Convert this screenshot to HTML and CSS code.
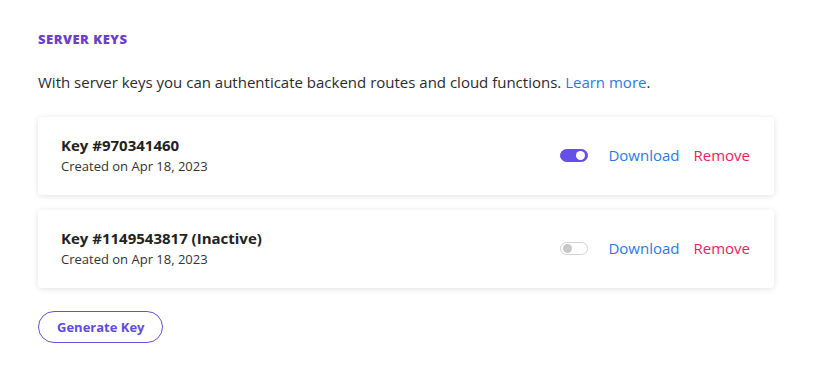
FILE: index.html
```html
<!DOCTYPE html>
<html lang="en">
<head>
    <meta charset="UTF-8">
    <meta name="viewport" content="width=device-width, initial-scale=1.0">
    <title>Server Keys</title>
    <link rel="stylesheet" href="styles.css">
</head>
<body>
    <div class="section">
        <h2 class="section-title">SERVER KEYS</h2>
        <p class="section-desc">With server keys you can authenticate backend routes and cloud functions. <a href="#" class="link">Learn more</a>.</p>

        <div class="key-card">
            <div class="key-info">
                <h3>Key #970341460</h3>
                <p>Created on Apr 18, 2023</p>
            </div>
            <div class="key-actions">
                <span class="toggle on"><span class="knob"></span></span>
                <a href="#" class="link">Download</a>
                <a href="#" class="remove">Remove</a>
            </div>
        </div>

        <div class="key-card">
            <div class="key-info">
                <h3>Key #1149543817 (Inactive)</h3>
                <p>Created on Apr 18, 2023</p>
            </div>
            <div class="key-actions">
                <span class="toggle"><span class="knob"></span></span>
                <a href="#" class="link">Download</a>
                <a href="#" class="remove">Remove</a>
            </div>
        </div>

        <button class="generate-btn">Generate Key</button>
    </div>
</body>
</html>
```

FILE: styles.css
```css
body {
    font-family: "Open Sans", sans-serif;
    margin: 0;
    padding: 0;
    background-color: #fff;
    color: #222;
}
.section {
    width: 736px;
    padding: 30px 38px;
}
.section-title {
    margin: 0;
    font-size: 13px;
    font-weight: 800;
    letter-spacing: 0.5px;
    color: #6c3fc9;
    line-height: 18px;
}
.section-desc {
    margin: 23px 0 24px;
    font-size: 15px;
    line-height: 22px;
    color: #2b2b2b;
}
.link {
    color: #2a7ae2;
    text-decoration: none;
}
.key-card {
    display: flex;
    justify-content: space-between;
    align-items: center;
    height: 78px;
    padding: 0 24px 2px 23px;
    box-sizing: border-box;
    margin-bottom: 15px;
    border-radius: 4px;
    box-shadow: 0 1px 6px rgba(0, 0, 0, 0.12);
}
.key-info h3 {
    margin: 0 0 2px;
    font-size: 15px;
    font-weight: 700;
    color: #222;
}
.key-info p {
    margin: 0;
    font-size: 13px;
    color: #333;
}
.key-actions {
    display: flex;
    align-items: center;
    font-size: 15px;
}
.toggle {
    display: flex;
    align-items: center;
    width: 28px;
    height: 13px;
    box-sizing: border-box;
    border-radius: 7px;
    border: 1px solid #d2d2d2;
    background-color: #fff;
    padding: 0 2px;
    margin-right: 20px;
}
.toggle .knob {
    width: 9px;
    height: 9px;
    border-radius: 50%;
    background-color: #c8c8c8;
}
.toggle.on {
    background-color: #6450e6;
    border-color: #6450e6;
    justify-content: flex-end;
}
.toggle.on .knob {
    background-color: #fff;
}
.remove {
    color: #e8245f;
    text-decoration: none;
    margin-left: 14px;
}
.generate-btn {
    margin-top: 8px;
    height: 32px;
    padding: 0 18px;
    font-family: inherit;
    font-size: 13px;
    font-weight: 700;
    color: #5d4ce0;
    background: #fff;
    border: 1px solid #6450e6;
    border-radius: 16px;
    cursor: pointer;
}
```
